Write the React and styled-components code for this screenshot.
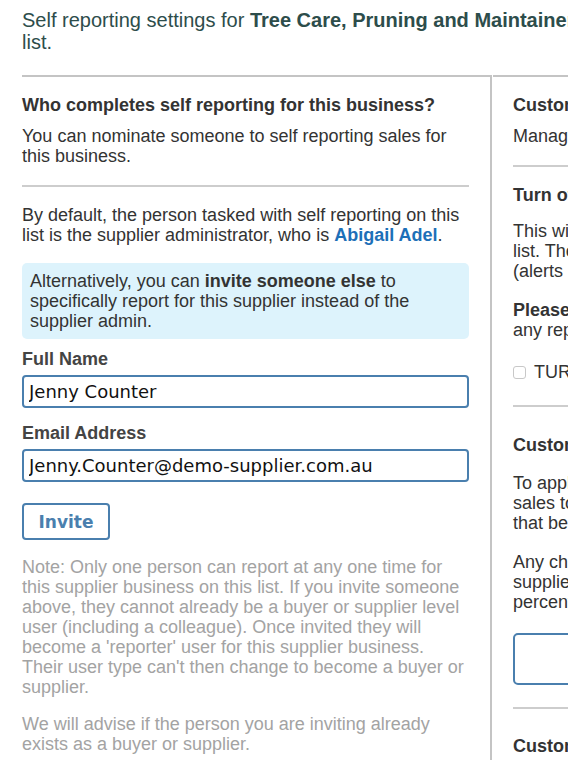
import React from 'react';
import styled, { createGlobalStyle } from 'styled-components';

const GlobalStyle = createGlobalStyle`
  html, body {
    margin: 0;
    padding: 0;
    background: #fff;
    overflow: hidden;
  }
  body {
    font-family: "Liberation Sans", Arial, Helvetica, sans-serif;
    color: #333;
  }
`;

const Page = styled.div`
  width: 1100px;
  padding: 9px 0 0 22px;
`;

const Title = styled.h1`
  margin: 0;
  width: 700px;
  font-size: 20px;
  line-height: 22px;
  font-weight: normal;
  color: #2d4d4b;

  strong {
    font-weight: bold;
  }
`;

const Columns = styled.div`
  display: flex;
  margin-top: 22px;
`;

const Column = styled.div`
  width: ${p => p.width}px;
  border-top: 2px solid #c4c4c4;
  padding: ${p => (p.right ? '18px 0 0 20px' : '18px 21px 0 0')};
  ${p => (p.right ? 'margin-left: 1px;' : 'border-right: 2px solid #c4c4c4;')}
  min-height: 700px;
`;

const Heading = styled.h2`
  margin: 0;
  font-size: 18px;
  line-height: 20px;
  font-weight: bold;
  color: #333;
`;

const Text = styled.p`
  margin: ${p => p.mt || 0}px 0 0;
  font-size: 18px;
  line-height: 20px;
  color: ${p => (p.muted ? '#a3a3a3' : '#333')};

  strong {
    font-weight: bold;
  }
`;

const Link = styled.a`
  color: #1d70b8;
  font-weight: bold;
  text-decoration: none;
`;

const Rule = styled.hr`
  margin: ${p => p.mt}px 0 ${p => p.mb}px;
  border: 0;
  border-top: 2px solid #cdcdcd;
`;

const Info = styled.div`
  margin-top: 18px;
  background: #ddf3fc;
  border-radius: 5px;
  padding: 8px;
  font-size: 18px;
  line-height: 20px;
  color: #333;

  strong {
    font-weight: bold;
  }
`;

const Label = styled.label`
  display: block;
  margin-top: ${p => p.mt}px;
  font-size: 18px;
  line-height: 20px;
  font-weight: bold;
  color: #444;
`;

const Input = styled.input`
  display: block;
  box-sizing: border-box;
  width: 100%;
  height: 33px;
  margin-top: 6px;
  padding: 0 5px;
  border: 2px solid #4a7fae;
  border-radius: 4px;
  font-family: "DejaVu Sans", Verdana, sans-serif;
  font-size: 18px;
  color: #111;
  outline: none;
`;

const Button = styled.button`
  display: block;
  margin-top: 21px;
  width: 88px;
  height: 37px;
  background: #fff;
  border: 2px solid #4a7fae;
  border-radius: 4px;
  font-family: "DejaVu Sans", Verdana, sans-serif;
  font-size: 17px;
  font-weight: bold;
  color: #4a7fae;
`;

const CheckRow = styled.label`
  display: flex;
  align-items: center;
  gap: 8px;
  margin-top: 22px;
  font-size: 18px;
  line-height: 20px;
  color: #333;
`;

const Box = styled.span`
  width: 11px;
  height: 11px;
  border: 1px solid #c8c8c8;
  border-radius: 3px;
  background: #fff;
`;

const BigInput = styled.div`
  margin-top: 21px;
  height: 48px;
  border: 2px solid #4a7fae;
  border-radius: 5px;
`;

export default function App() {
  return (
    <>
      <GlobalStyle />
      <Page>
        <Title>
          Self reporting settings for <strong>Tree Care, Pruning and Maintainence Services</strong>{' '}
          list.
        </Title>
        <Columns>
          <Column width={447}>
            <Heading>Who completes self reporting for this business?</Heading>
            <Text mt={11}>You can nominate someone to self reporting sales for this business.</Text>
            <Rule mt={19} mb={18} />
            <Text>
              By default, the person tasked with self reporting on this list is the supplier
              administrator, who is <Link href="#">Abigail Adel</Link>.
            </Text>
            <Info>
              Alternatively, you can <strong>invite someone else</strong> to specifically report for
              this supplier instead of the supplier admin.
            </Info>
            <Label mt={10}>Full Name</Label>
            <Input defaultValue="Jenny Counter" />
            <Label mt={15}>Email Address</Label>
            <Input defaultValue="Jenny.Counter@demo-supplier.com.au" />
            <Button>Invite</Button>
            <Text muted mt={17}>
              Note: Only one person can report at any one time for this supplier business on this
              list. If you invite someone above, they cannot already be a buyer or supplier level
              user (including a colleague). Once invited they will become a 'reporter' user for this
              supplier business. Their user type can't then change to become a buyer or supplier.
            </Text>
            <Text muted mt={17}>
              We will advise if the person you are inviting already exists as a buyer or supplier.
            </Text>
          </Column>
          <Column right width={460}>
            <Heading>Customer self reporting</Heading>
            <Text mt={11}>Manage how this supplier reports sales on this list.</Text>
            <Rule mt={19} mb={18} />
            <Heading>Turn off self reporting for this supplier</Heading>
            <Text mt={16}>
              This will stop the supplier from self reporting sales on this
              <br />
              list. The supplier will no longer receive reminders
              <br />
              (alerts and emails) for this list.
            </Text>
            <Text mt={19}>
              <strong>Please note:</strong> turning this off will not remove
              <br />
              any reports that have already been submitted.
            </Text>
            <CheckRow>
              <Box />
              TURN OFF SELF REPORTING
            </CheckRow>
            <Rule mt={23} mb={28} />
            <Heading>Custom commission percentage</Heading>
            <Text mt={18}>
              To apply a different commission percentage to the
              <br />
              sales to this supplier, enter a custom value below
              <br />
              that be used instead of the list default.
            </Text>
            <Text mt={19}>
              Any change will apply to reports submitted by this
              <br />
              supplier from now on, and will use the new
              <br />
              percentage.
            </Text>
            <BigInput />
            <Rule mt={22} mb={27} />
            <Heading>Customer reporting history</Heading>
          </Column>
        </Columns>
      </Page>
    </>
  );
}
